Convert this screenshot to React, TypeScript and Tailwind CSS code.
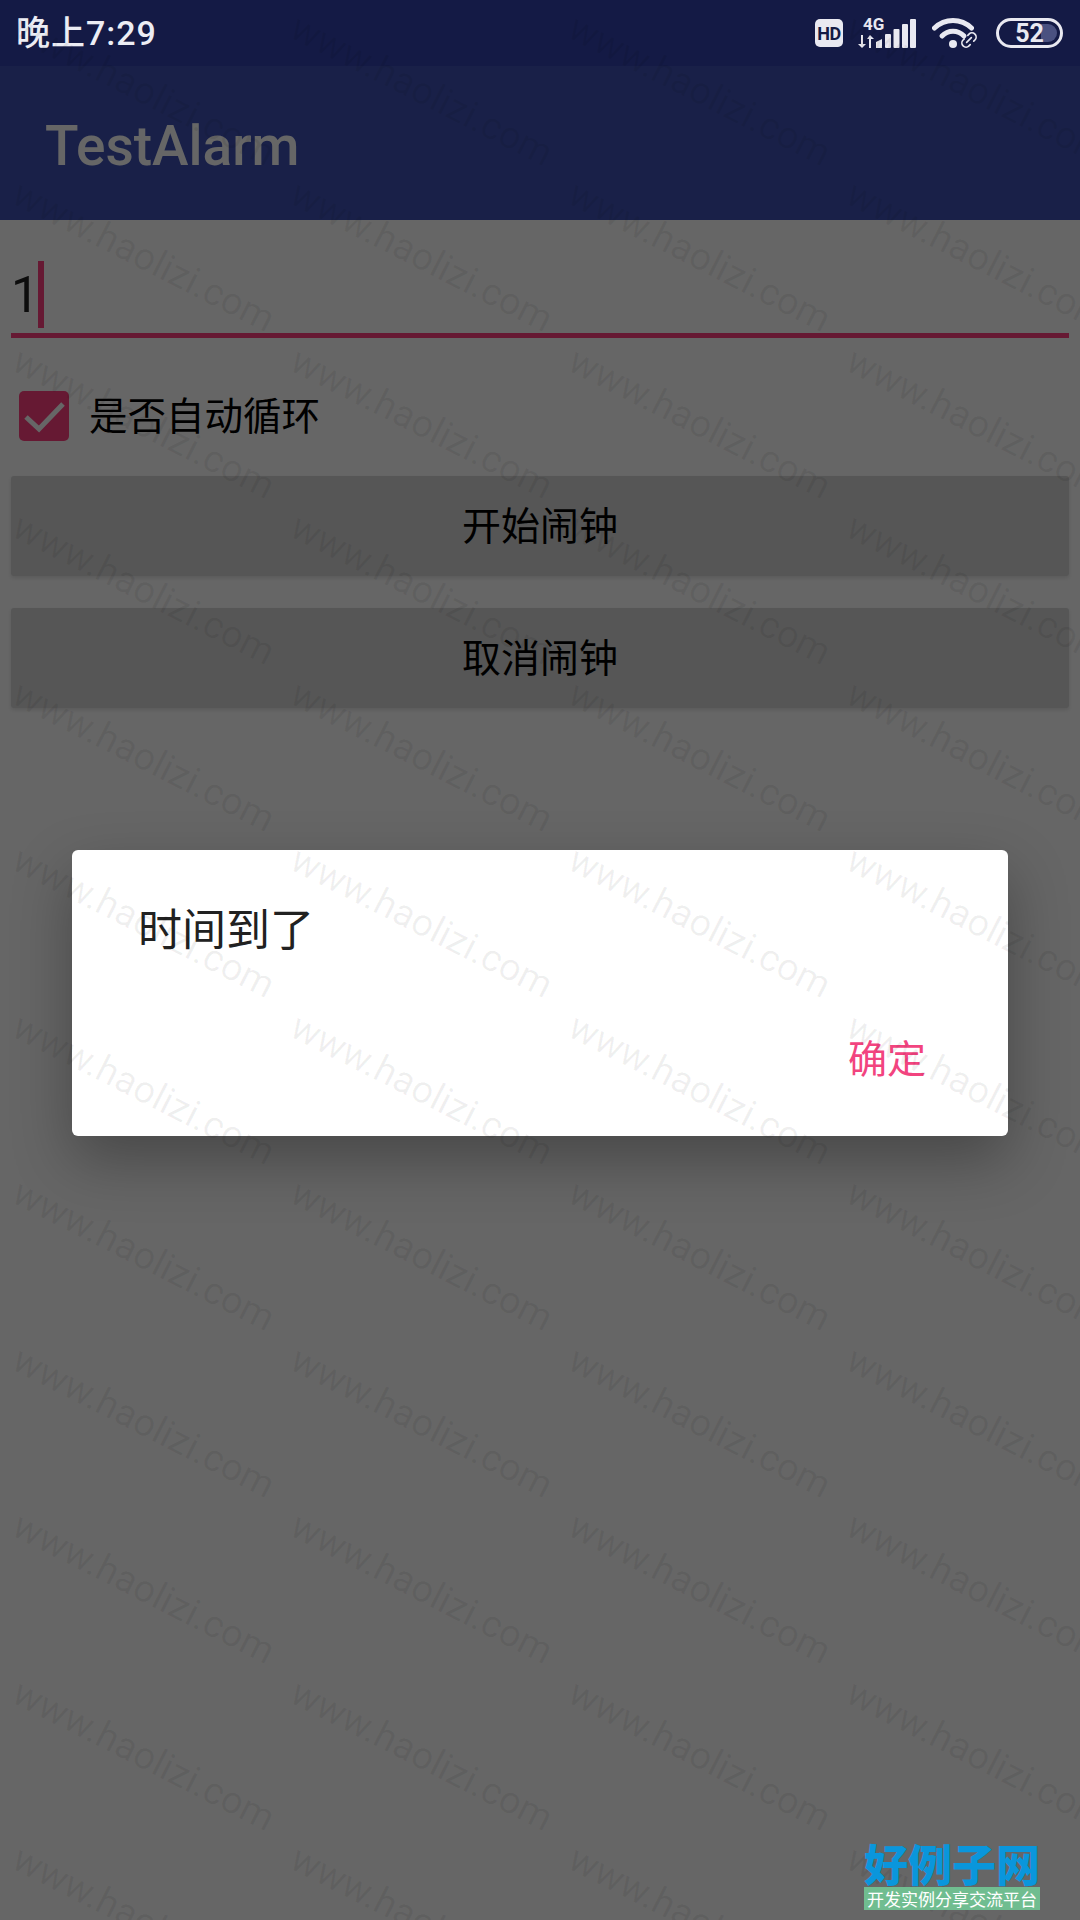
import { Link2 } from 'lucide-react';

const cells = Array.from({ length: 52 }, (_, i) => i);
const sans = "font-['Roboto','Noto_Sans_CJK_SC',sans-serif]";

function SignalBars() {
  return (
    <svg width="40" height="30" viewBox="0 0 40 30" className="fill-[#e9e9f1]">
      <path d="M0 23 L6 20 V29 H0 Z" />
      <rect x="9" y="15" width="6" height="14" rx="1" />
      <rect x="17.5" y="10" width="6" height="19" rx="1" />
      <rect x="26" y="5" width="6" height="24" rx="1" />
      <rect x="34" y="0" width="6" height="29" rx="1" />
    </svg>
  );
}

function Wifi() {
  return (
    <div className="relative h-[32px] w-[48px]">
      <svg width="42" height="32" viewBox="0 0 42 32" fill="none" stroke="#e9e9f1" strokeWidth="5" strokeLinecap="round">
        <path d="M2.5 11 C13 1 29 1 39.5 11" />
        <path d="M10 19 C16 12.5 26 12.5 32 19" />
        <circle cx="21" cy="27" r="4" fill="#e9e9f1" stroke="none" />
      </svg>
      <Link2 className="absolute bottom-[-1px] right-[1px] -rotate-45 text-[#e9e9f1]" size={20} strokeWidth={2} />
    </div>
  );
}

function StatusBar() {
  return (
    <div className={`flex h-[66px] items-center justify-between bg-[#141a45] pl-[16px] pr-[17px] ${sans}`}>
      <span className="text-[34px] font-medium leading-none tracking-[1px] text-[#ecedf4]">晚上7:29</span>
      <div className="flex items-center">
        <div className="flex h-[28px] w-[28px] items-center justify-center rounded-[5px] bg-[#e9e9f1] text-[18px] font-bold tracking-[-0.5px] text-[#141a45]">
          HD
        </div>
        <div className="ml-[15px] flex w-[58px] items-end">
          <div className="flex w-[18px] flex-col items-start">
            <span className="ml-[5px] text-[17px] font-bold leading-[15px] text-[#e9e9f1]">4G</span>
            <svg width="16" height="14" viewBox="0 0 16 14" className="mt-[3px] fill-[#e9e9f1]">
              <path d="M3 0 H5 V9 H8 L4 13 L0 9 H3 Z" />
              <path d="M11 13 H13 V4 H16 L12 0 L9 4 H11 Z" />
            </svg>
          </div>
          <SignalBars />
        </div>
        <div className="ml-[16px]">
          <Wifi />
        </div>
        <div className="relative ml-[16px] flex h-[30px] w-[67px] items-center justify-center rounded-full border-[3px] border-[#e9e9f1]">
          <div className="absolute bottom-[3px] right-[3px] top-[3px] w-[16px] rounded-r-full bg-[#4a5180]" />
          <span className="relative text-[25px] font-bold leading-none text-[#e9e9f1]">52</span>
        </div>
      </div>
    </div>
  );
}

function AlarmForm() {
  return (
    <div className="bg-white">
      <div className="flex h-[154px] items-center bg-[#3f51b5] pl-[45px] pt-[6px]">
        <span className="text-[55px] font-medium leading-none text-white">TestAlarm</span>
      </div>
      <div className="px-[11px]">
        <div className="mt-[41px] flex h-[67px] items-center">
          <span className="text-[50px] leading-none text-[#222]">1</span>
          <span className="ml-[-1px] h-[67px] w-[6px] bg-[#ff4081]" />
        </div>
        <div className="mt-[5px] h-[5px] bg-[#ff4081]" />
        <div className="mt-[53px] flex items-center pl-[8px]">
          <div className="flex h-[50px] w-[50px] items-center justify-center rounded-[5px] bg-[#ff4081]">
            <svg width="50" height="50" viewBox="0 0 50 50" fill="none" stroke="white" strokeWidth="5">
              <path d="M7 26 L20 38 L44 13" />
            </svg>
          </div>
          <span className="ml-[20px] pt-[2px] text-[38.5px] leading-none text-black">是否自动循环</span>
        </div>
        <button type="button" className="mt-[35px] flex h-[100px] w-full items-center justify-center rounded-[3px] bg-[#d6d7d7] pt-[2px] text-[39px] text-black shadow-[0_2px_4px_rgba(0,0,0,0.12)]">
          开始闹钟
        </button>
        <button type="button" className="mt-[32px] flex h-[100px] w-full items-center justify-center rounded-[3px] bg-[#d6d7d7] pt-[2px] text-[39px] text-black shadow-[0_2px_4px_rgba(0,0,0,0.12)]">
          取消闹钟
        </button>
      </div>
    </div>
  );
}

function AlarmDialog() {
  return (
    <div className="absolute inset-0 flex flex-col items-center bg-black/60 pt-[784px]">
      <div className="flex h-[286px] w-[936px] flex-col rounded-[6px] bg-white shadow-[0_24px_60px_rgba(0,0,0,0.3)]">
        <p className="pl-[66px] pt-[59px] text-[44px] leading-none text-[#212121]">时间到了</p>
        <div className="mt-[88px] flex justify-end pr-[82px]">
          <span className="text-[39px] leading-none text-[#f2447f]">确定</span>
        </div>
      </div>
    </div>
  );
}

function Watermark() {
  return (
    <div className="pointer-events-none absolute left-[5px] top-[-160px] grid grid-cols-[repeat(4,278px)] auto-rows-[166.5px]">
      {cells.map((i) => (
        <div key={i} className="flex items-center justify-center">
          <span className="rotate-[27deg] whitespace-nowrap font-['Roboto',sans-serif] text-[38px] leading-none text-black/[0.06]">
            www.haolizi.com
          </span>
        </div>
      ))}
    </div>
  );
}

function SiteBadge() {
  return (
    <div className="absolute bottom-[10px] left-[864px] flex w-[176px] flex-col items-center">
      <span className="whitespace-nowrap font-['Noto_Sans_CJK_SC',serif] text-[44px] font-black leading-[44px] text-[#0a96dc]">好例子网</span>
      <span className="mt-[2px] flex h-[23px] w-full items-center justify-center bg-[#70bd90] font-['Noto_Sans_CJK_SC',sans-serif] text-[17px] leading-none text-white">
        开发实例分享交流平台
      </span>
    </div>
  );
}

export default function App() {
  return (
    <div className={`relative h-[1920px] w-[1080px] overflow-hidden bg-white ${sans}`}>
      <StatusBar />
      <div className="relative h-[1854px]">
        <AlarmForm />
        <AlarmDialog />
      </div>
      <Watermark />
      <SiteBadge />
    </div>
  );
}
